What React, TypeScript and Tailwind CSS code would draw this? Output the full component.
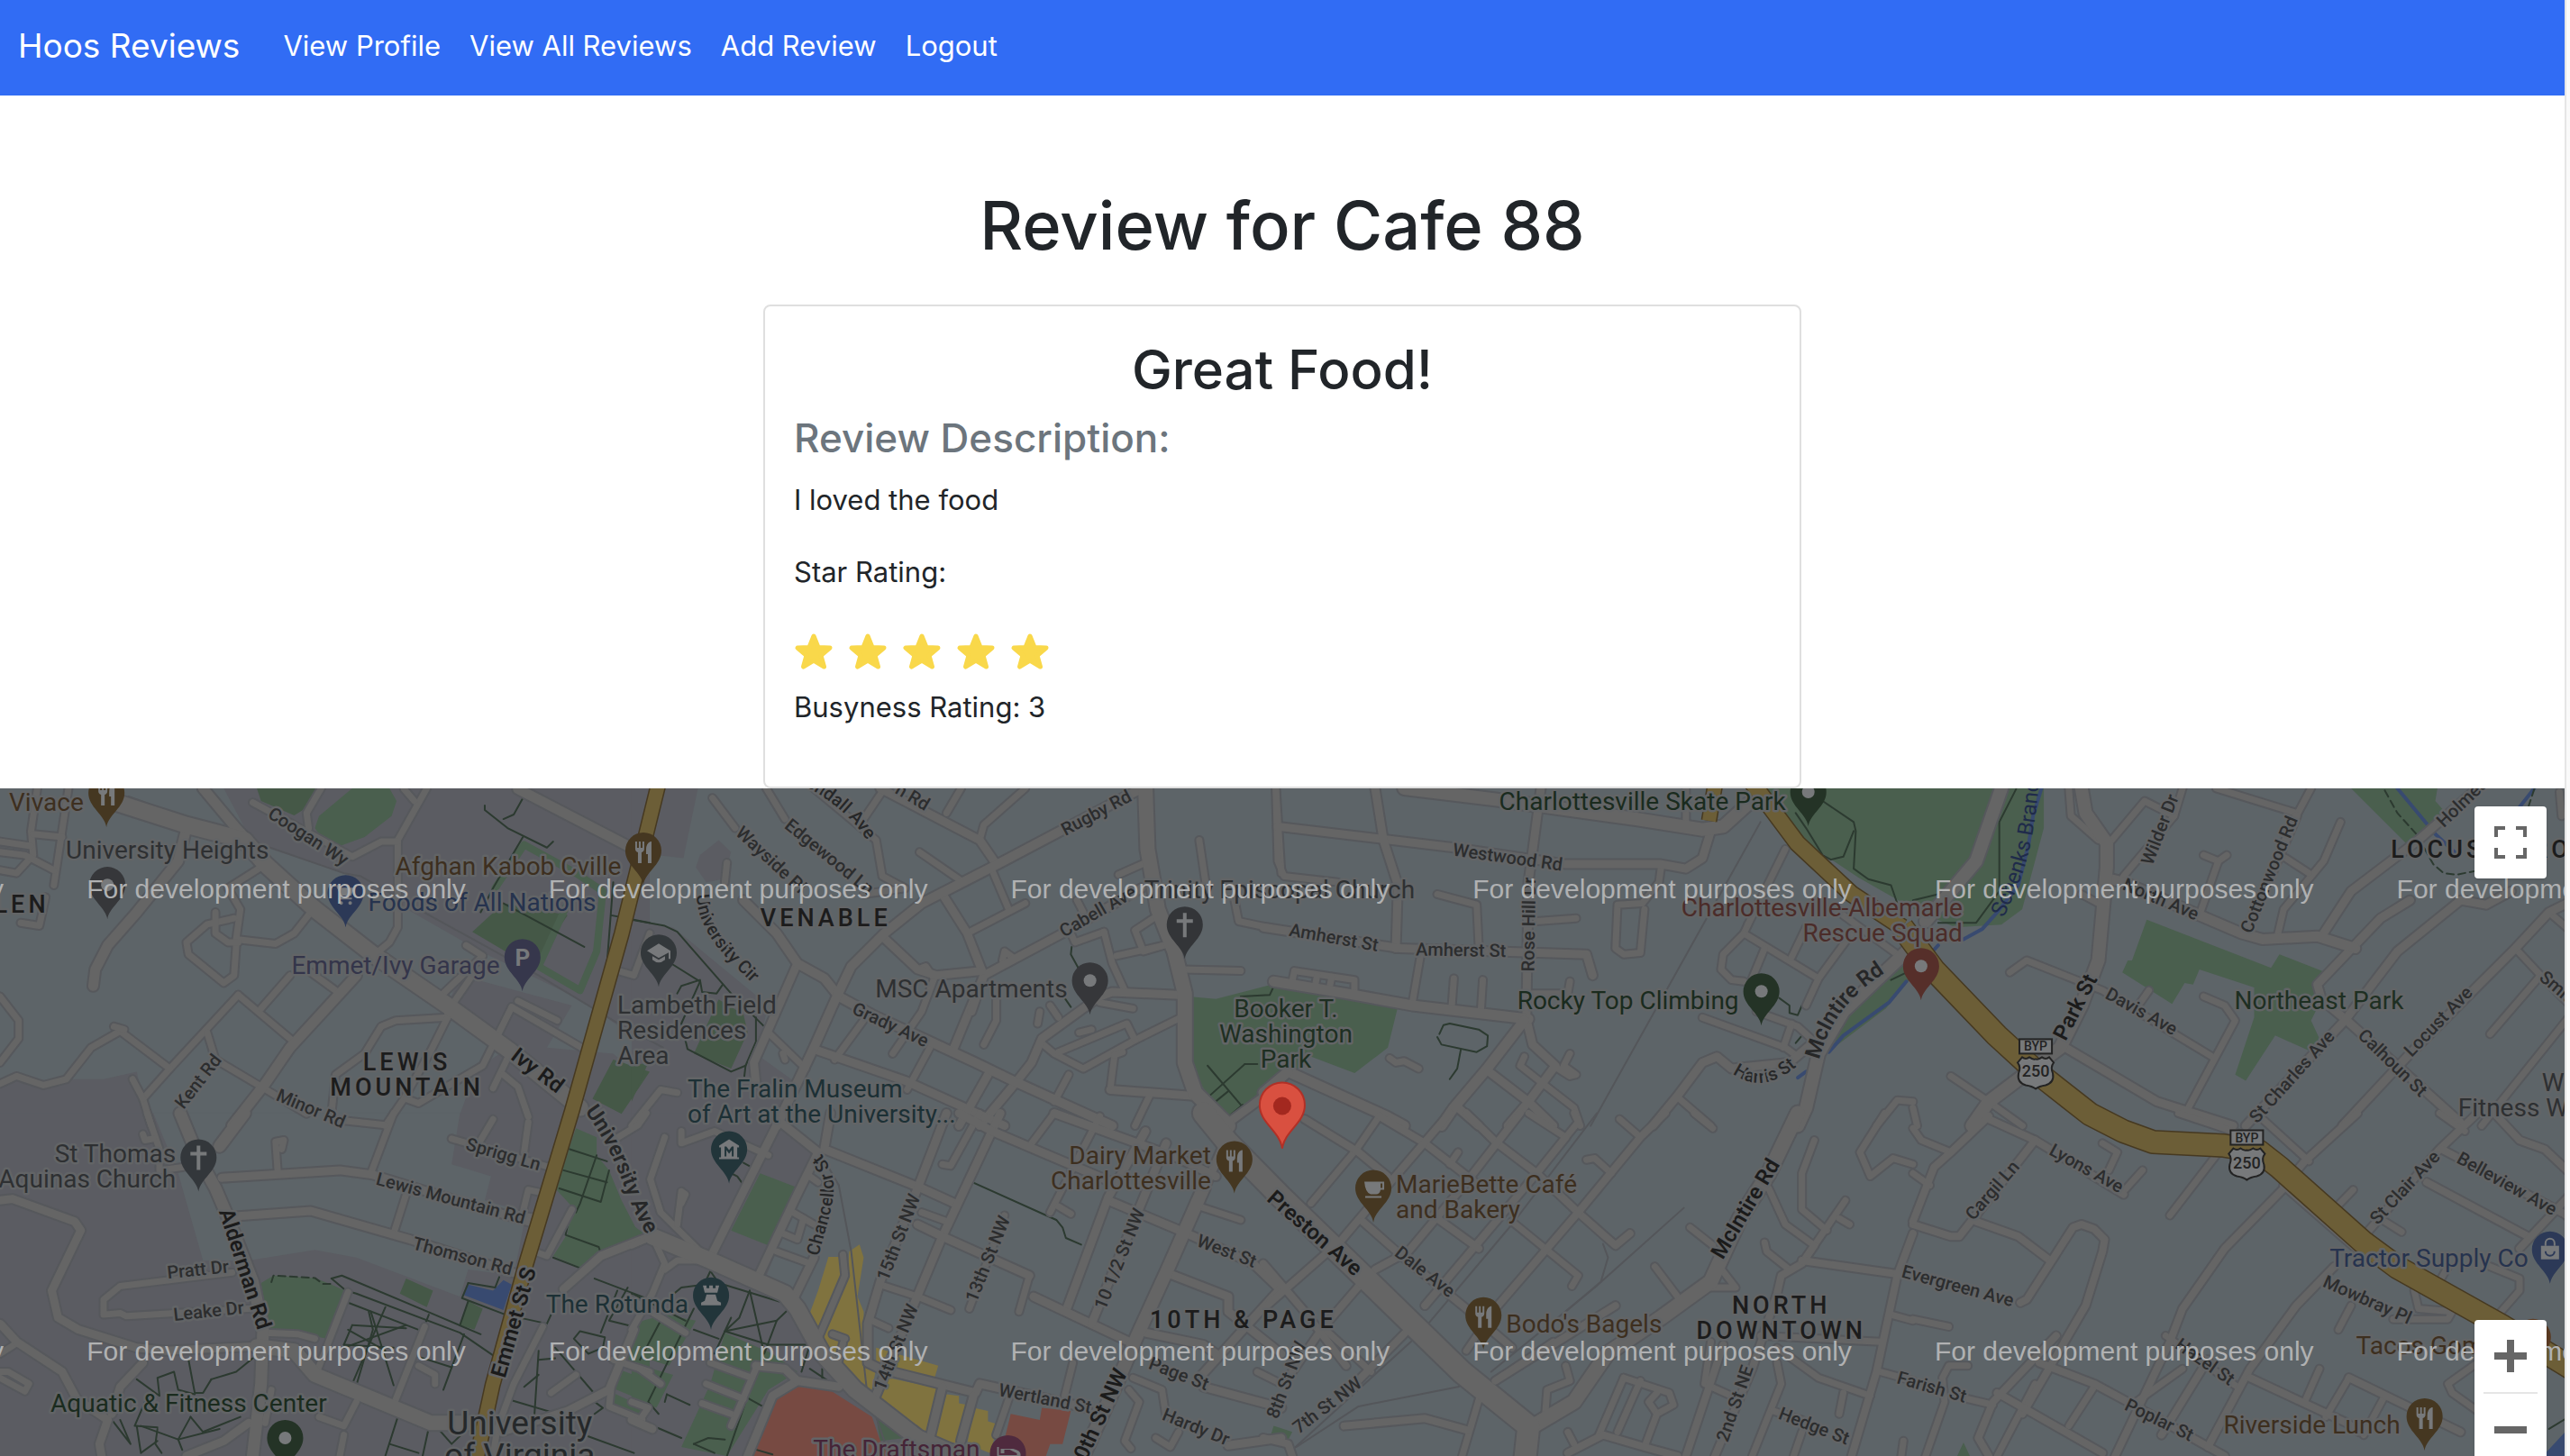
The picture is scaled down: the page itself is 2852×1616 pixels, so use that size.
import React from "react";

/* ---------- map data ---------- */

type TileKey = "A0" | "A1" | "A2" | "A3" | "B0" | "B1" | "B2" | "B3" | "W";

// Origin and horizontal / vertical scale of every survey tile.
const TILES: Record<TileKey, [number, number, number, number]> = {
  A0: [0, 870, 720 / 1568, 1 / 3],
  A1: [700, 870, 720 / 1568, 1 / 3],
  A2: [1400, 870, 720 / 1568, 1 / 3],
  A3: [2120, 870, 732 / 1568, 1 / 3],
  B0: [0, 1236, 720 / 1568, 1 / 3],
  B1: [700, 1236, 720 / 1568, 1 / 3],
  B2: [1400, 1236, 720 / 1568, 1 / 3],
  B3: [2120, 1236, 732 / 1568, 1 / 3],
  W: [0, 0, 1, 1],
};

const at = (tile: TileKey, x: number, y: number): [number, number] => {
  const [ox, oy, sx, sy] = TILES[tile];
  return [Math.round(ox + x * sx), Math.round(oy + y * sy)];
};

const AREAS: [TileKey, string, string[]][] = [
  ["A0", "#5b5c62", [
    "540,18 1568,18 1568,880 1400,720 1160,560 830,300 610,200",
    "0,1010 40,975 105,1005 160,985 250,985 330,960 345,1050 370,1140 0,1140",
    "1110,640 1380,740 1320,880 1480,900 1568,1000 1568,1140 1100,1140 1150,950 1230,880 1080,740",
  ]],
  ["A1", "#5b5c62", ["0,18 160,18 125,250 60,240 0,440", "0,450 100,480 330,740 300,900 400,1000 340,1140 0,1140", "210,190 240,230 220,320 180,330 155,280 165,240"]],
  ["B0", "#5b5c62", ["0,0 1568,0 1568,1140 0,1140"]],
  ["B0", "#5d6468", ["370,0 1110,0 1090,170 1185,210 1170,290 1270,330 1240,540 1130,520 1110,610 860,480 760,455 600,490 490,490 430,200"]],
  ["B1", "#5b5c62", ["0,0 350,0 450,130 400,280 320,560 440,700 520,880 580,960 700,1140 0,1140"]],
  ["A0", "#455847", ["620,18 770,18 755,70 710,108 630,60", "1215,400 1370,440 1300,580 1220,560 1140,495", "1480,920 1568,960 1500,1100 1430,1050"]],
  ["A0", "#4a5f4e", ["850,18 940,18 957,60 945,110 880,180 820,210 780,190 760,150 770,110"]],
  ["A1", "#455847", ["210,720 270,770 280,830 240,950 150,900", "0,940 40,930 0,1060"]],
  ["A1", "#4a5f4e", ["1345,710 1410,718 1545,670 1850,740 1825,880 1745,965 1640,910 1600,960 1440,1120 1360,980 1345,900"]],
  ["W", "#4a5f4e", ["1946,876 2265,876 2265,920 2241,1010 2218,1027 2167,1030 2125,1012 2060,975 1992,930 1975,905", "2124,1050 2140,1060 2090,1120 2030,1165 2045,1130"]],
  ["A3", "#4a5f4e", [
    "555,455 850,615 870,570 980,630 960,690 970,720 945,790 965,850 940,890 860,840 790,990 765,970 810,780 810,680 680,620 665,670 645,665 615,735 497,630 510,590 520,590",
    "1040,18 1245,18 1240,60 1265,100 1170,200",
  ]],
  ["B0", "#4a5f4e", [
    "630,565 660,540 760,548 800,570 840,595 790,750 650,715",
    "1390,50 1440,80 1440,140 1470,190 1500,290 1545,410 1450,475 1405,515 1335,475 1370,400 1380,310 1340,250",
    "1540,740 1568,750 1568,870 1500,820", "1490,850 1568,890 1560,960 1480,915", "1480,930 1550,975 1545,1010 1475,970",
  ]],
  ["B0", "#455847", ["980,550 1045,590 1030,645 965,600", "1130,625 1165,650 1145,720 1110,705"]],
  ["B0", "#384a70", ["1215,555 1235,570 1215,655 1120,605 1130,570 1190,590"]],
  ["B1", "#4a5f4e", [
    "310,200 395,245 330,440 240,390", "80,670 155,690 130,750 90,840 0,800 0,700", "225,730 340,800 400,860 330,920 230,1140 120,1110 190,900",
    "590,1010 660,1080 600,1090", "0,830 100,870 60,980 0,950", "0,370 30,400 0,430",
  ]],
  ["B1", "#80733f", [
    "475,478 505,478 510,540 450,710 430,665 450,590",
    "525,460 550,437 560,480 545,610 560,660 560,760 590,850 575,950 520,880 500,830 460,745 520,560",
    "590,780 740,840 730,885 590,850", "620,880 740,915 715,1070 595,970",
    "760,935 790,940 790,965 810,970 790,1100 730,1080", "825,980 860,990 860,1025 885,1035 865,1130 810,1100",
  ]],
  ["B1", "#774a42", ["410,895 460,905 580,1010 600,1090 620,1140 280,1140 330,940", "915,1000 985,1020 990,980 1060,990 1040,1100 1010,1100 1000,1140 890,1140"]],
  ["B2", "#4a5f4e", ["25,1040 70,1060 55,1100 15,1085"]],
  ["B3", "#384a70", ["1568,1030 1568,1140 1495,1140"]],
  ["B3", "#4a5f4e", ["120,1095 135,1140 105,1140"]],
];

// Streets: tile, carriageway width, centre lines.
const STREETS: [TileKey, number, string[]][] = [
  ["A0", 7, [
    "90,18 75,160 80,240 40,300 0,290", "165,20 130,340", "80,170 150,180", "0,195 75,210", "0,230 60,240 130,290",
    "630,280 550,350 580,420 570,520 665,535 710,500 750,430", "565,450 500,470 450,530 455,570 540,665 565,640 570,540",
    "520,430 520,500 550,530 575,530", "1030,18 960,190 960,480 940,530 905,570", "610,65 850,245 920,195 960,195",
    "775,18 740,100 745,150", "575,705 410,950 345,1050 365,1140", "575,705 700,850", "700,640 630,750", "750,630 810,690",
    "0,1000 40,975 105,1005 160,985 220,880 290,825 410,950", "500,830 520,920 630,1010 740,1100", "0,710 45,790 45,850 0,930",
    "320,985 345,1050", "1080,780 955,790 920,810 880,900 810,970 800,1100", "1080,740 1080,780 1040,890 975,1050 930,1140",
    "1235,745 1165,940 1090,1000 1010,1065 980,1050", "1235,745 1410,885", "1230,900 1190,1015", "1125,540 1165,575 1070,700",
    "1140,640 1090,740", "975,20 1000,60", "1480,620 1530,640 1568,500", "50,465 95,475 110,380", "275,810 300,820",
    "1215,970 1250,1010 1275,1110", "1250,725 1345,790",
  ]],
  ["A0", 11, ["490,18 570,150 610,210", "450,150 430,260 330,430 260,540 230,620 225,675", "860,640 780,760 700,880 640,1000 560,1140", "1250,20 1530,220"]],
  ["A0", 18, ["280,65 450,140 590,190 640,270 760,420 900,570 1080,740 1230,890 1400,1080"]],
  ["A1", 7, [
    "195,50 250,150", "230,265 225,330", "325,18 370,120", "440,18 590,190 605,310 660,350 560,370", "610,18 560,120", "795,18 760,100",
    "950,18 850,140 840,190", "695,230 800,330", "870,290 910,420", "950,400 810,500", "690,620 710,610 730,650 700,760 630,900",
    "895,590 900,560 920,580", "1175,305 1240,265", "1330,620 1470,625", "985,860 1020,900 1090,950 1215,855 1325,780",
    "1215,855 1195,800 1030,895", "1140,495 1070,530 1060,500", "1140,495 1160,600 1190,690", "1285,540 1170,575", "1270,440 1215,490 1235,560 1285,540",
    "1370,190 1385,330", "1075,390 1090,430", "1455,390 1465,460 1568,490", "1555,18 1568,300", "570,770 490,920", "720,880 665,1020",
    "330,830 420,950", "1165,910 1155,1020", "1185,895 1165,905", "0,1140 70,1020 110,1030", "1250,1040 1215,1140", "1055,970 1020,1060",
    "1010,740 1030,780", "985,760 980,800", "880,720 880,790 850,870", "1130,730 1210,750", "365,900 370,920", "1080,830 1110,820",
  ]],
  ["A1", 9, [
    "600,18 840,190 880,270", "755,380 810,500 850,640 775,890", "1230,350 1040,500 850,640 820,760", "605,510 690,620 735,640 845,625",
    "1320,705 1160,695 1130,710 990,850 965,930 925,1000 840,1140", "440,885 660,990 900,1140", "400,600 295,930 300,1000", "860,970 790,1140",
    "1155,1020 1350,1040", "1440,1130 1568,1000",
  ]],
  ["A1", 10, ["270,390 350,500 400,600 465,650 500,710 580,770 830,930 920,990 1160,1140", "1230,18 870,280 700,400 610,500 530,610 495,710 440,880 350,1140"]],
  ["A1", 16, ["1240,18 1245,220 1270,420 1310,560 1335,700 1335,930 1360,1030 1440,1140"]],
  ["A2", 7, [
    "30,18 35,260 50,310 180,330", "960,280 955,330 915,400 855,405 850,550 870,570 910,565 920,420", "660,460 755,450", "420,370 515,405 520,540",
    "380,570 360,730", "460,650 455,740", "530,655 525,760", "740,660 735,700 650,700", "70,660 75,625 220,655 220,690", "130,640 125,675", "165,645 160,680",
    "1170,470 1160,500 1340,650", "1160,500 1110,570 1105,620 1130,655 1160,660", "1210,550 1180,650", "1420,500 1340,650 1310,740", "1260,220 1170,470",
    "1060,780 1260,880 1290,910", "1190,760 1290,810 1330,860", "1275,800 1255,880", "1000,1045 1080,1140", "1400,440 1540,580", "1568,1060 1530,1055 1480,1140",
    "630,910 620,940 675,1000 750,1080 765,1140", "740,900 725,940 755,970 740,975 700,940", "1020,18 1020,130", "305,915 320,930 340,925 375,950", "1310,480 1275,580",
  ]],
  ["A2", 9, [
    "35,145 460,215 730,270 960,270 1020,285 1060,250 1080,160", "270,18 290,190 325,340 320,550", "670,18 640,330 635,770", "0,480 330,550 780,570 795,640",
    "635,785 650,870 705,940 640,1060 590,1140", "540,955 640,1060 700,1140", "1330,860 1270,930 1130,950 1095,910 1060,930 1000,1040 940,1140", "470,1080 520,1140",
  ]],
  ["A2", 11, ["25,660 200,700 360,740 640,785", "630,790 540,950 460,1080 430,1140", "60,960 300,1110 340,1140", "0,1030 60,960"]],
  ["A2", 14, ["340,18 560,55 900,120 1060,155 1110,145 1170,70", "1568,540 1400,760 1340,900 1310,1080 1290,1140"]],
  ["A3", 7, [
    "370,18 375,110 440,190", "460,210 550,60 620,110 640,18", "620,110 500,310", "720,18 910,100", "945,18 910,110", "1015,130 975,260 880,420 865,510",
    "885,250 940,300", "690,240 725,260 745,240", "725,260 680,440", "230,630 270,590 450,690 710,910", "560,690 540,730", "690,710 740,740 765,790 650,1090",
    "1510,430 1568,500", "1430,550 1490,640 1568,750", "1490,640 1370,835", "1568,760 1350,1140", "90,975 180,1060 260,1140", "0,1080 10,1140",
    "1535,30 1540,110", "400,370 440,400",
  ]],
  ["A3", 9, [
    "910,110 790,500", "1340,18 1200,190 1040,360 970,510", "1180,390 1110,450 960,670 970,720 1030,790 1300,1130",
    "1420,360 1360,405 1300,390 1150,560 1025,790 790,1140", "1568,390 1510,430 1430,550 1180,900 1020,1140", "350,870 580,1060 760,1140",
  ]],
  ["A3", 11, ["470,320 500,330 680,440 780,500 830,520 960,510 1050,550"]],
  ["A3", 14, ["400,18 410,100 460,200 460,280 440,590 400,740 350,880 180,1060 140,1140", "210,18 150,260 30,460"]],
  ["B0", 7, [
    "355,0 385,120 385,190 440,180", "950,0 895,200", "980,270 950,400", "670,190 665,95 685,90 680,120", "800,20 930,40", "1090,85 1340,185", "1160,90 1190,20",
    "1265,130 1275,30", "1310,265 1275,255 1260,340 1300,350", "560,530 290,575 250,620 250,670 290,665 305,675 600,650", "640,730 720,735 760,750",
    "840,595 765,860", "1025,710 950,970", "1310,710 1240,900 1200,1050 1190,1140", "1380,320 1320,475 1300,465", "0,800 40,765",
    "0,860 20,860 70,900 60,925 0,880", "860,960 830,1040 770,1010", "1480,90 1540,40 1560,0", "1480,820 1568,860", "1475,915 1470,975 1550,1020",
    "345,70 350,90 370,85", "655,920 640,1030", "1010,840 1050,870 1050,900", "1330,930 1390,870", "830,1070 820,1140",
  ]],
  ["B0", 9, [
    "535,215 820,190 900,205 1100,290 1300,370", "550,345 750,325 990,420 1260,540", "0,290 30,285 180,360 195,390 125,590 140,680 190,720 330,780 400,790 620,775",
    "1560,415 1450,475 1360,585", "0,700 40,760 150,860 185,950 260,1020 240,1100 245,1140", "345,830 290,910 270,1000", "450,1140 540,1090 600,1030",
    "1530,720 1470,920 1370,990 1210,1060",
  ]],
  ["B0", 13, ["590,0 530,110", "435,0 480,150 520,250 545,330 610,560 635,720 630,900 610,1140"]],
  ["B0", 16, ["620,775 710,790 760,870 900,950 1040,1030 1150,1030"]],
  ["B1", 7, [
    "390,330 440,370", "350,460 430,500", "415,350 400,420 365,400", "960,540 935,660", "1020,0 960,110", "1130,10 1010,330", "1030,310 1060,335",
    "1370,310 1470,355", "600,570 690,610 770,655", "580,690 620,715", "910,950 880,1070", "1065,830 1045,940", "1200,920 1225,960 1190,1090 1205,1115",
    "1210,880 1280,920 1290,1010", "80,80 45,220 70,330 180,480", "110,370 120,260 130,270 120,300", "0,440 50,410 80,500 50,600 0,720", "80,520 110,490 190,490",
    "510,470 515,540 450,750", "485,735 515,750", "300,850 240,1040", "0,620 130,730", "750,170 770,175 840,0", "900,340 815,650", "700,330 760,360",
    "20,850 70,900", "190,830 290,880", "180,900 270,950", "170,965 240,1000", "0,960 40,980 20,1020", "120,60 120,100 200,60 330,140", "510,765 495,850",
    "1510,860 1568,900", "1265,1080 1300,1110 1320,1060", "430,210 450,230",
  ]],
  ["B1", 9, [
    "350,40 190,480", "350,20 450,130 400,270 300,560", "480,0 465,120 700,250 780,300", "440,480 390,620", "760,0 690,250 600,560 570,700 570,830 600,850 830,930 840,900 1100,980",
    "890,0 750,410 680,640 580,970", "1150,290 1340,400 1500,500 1568,590", "690,370 750,410 960,540", "1240,60 1150,280 1050,650", "970,610 1200,760",
    "1290,100 1110,700", "1440,70 1370,290", "790,0 870,60 1160,230", "1290,530 1440,610 1440,660 1568,800", "1568,580 1370,880", "1240,730 1380,770 1410,800",
    "750,910 720,1080", "825,940 795,1090", "1380,910 1568,980", "1440,1105 1568,1080", "280,1140 340,940 400,890 500,910", "0,1020 50,1050", "1020,0 1320,150 1410,210",
    "300,840 370,850 400,890",
  ]],
  ["B1", 14, ["1380,250 1290,530 1220,740 1180,870 1090,1140"]],
  ["B1", 18, ["50,410 190,490 370,600 400,650 460,800 540,920 690,1080 790,1140"]],
  ["B2", 7, [
    "640,0 730,80 760,30 750,0", "280,10 225,120 115,300", "600,360 760,540 745,575", "150,720 260,860", "860,20 910,80", "780,155 800,150 840,200", "1040,0 1085,50",
    "470,130 450,170", "1330,90 1300,200 1300,320 1360,390", "1220,250 1260,370 1330,440 1405,290", "1390,350 1415,370", "1210,430 1215,460 1265,515", "1030,380 1085,440",
    "945,510 1000,610", "1095,500 1140,580 1060,580", "1500,0 1440,130 1465,210 1520,150 1568,170", "1568,690 1515,670", "1240,780 1340,880 1465,940", "1400,930 1390,1000",
    "1490,860 1568,890", "1240,830 1250,900 1180,1140", "870,880 810,1070", "870,880 980,930 990,970 950,1000 930,960 950,930", "950,1000 920,1110", "910,890 855,1060",
    "735,1060 750,1100", "525,930 480,1140", "1080,760 1065,900 1130,940", "730,840 740,890 685,920 680,1010", "1230,990 1300,1020", "1300,1060 1280,1140",
    "1200,740 1490,760", "560,890 700,760", "490,790 520,730", "1545,1090 1540,1140",
  ]],
  ["B2", 8, [
    "100,20 230,130 300,210", "280,10 390,100 520,240", "490,0 560,95 660,200 760,330 850,440 885,400", "450,0 300,240 190,420 0,650", "620,0 490,230 350,460 270,520",
    "730,80 660,200 390,640", "970,0 910,80 760,330 560,650", "240,360 330,470 490,650 600,780", "0,500 100,660 200,840", "240,560 140,720 60,880", "350,720 200,930", "410,340 520,450",
    "1330,440 1300,500 1250,540 1240,600 1180,850 1090,1140", "1300,490 1530,535", "1568,400 1530,540 1480,860 1420,1140", "735,1130 820,1070 920,1110 1000,1140",
    "195,1040 390,1015 495,1055", "560,890 850,640", "1110,770 1020,1140", "0,1080 60,1100 70,1140",
  ]],
  ["B2", 16, ["640,1050 750,960 830,800 960,680 1080,560 1150,350 1220,200 1290,0"]],
  ["B3", 7, [
    "0,50 20,90 90,130", "0,200 40,240", "430,910 370,1040", "720,140 610,340", "600,740 770,910", "545,190 500,260", "450,100 485,130 465,190", "830,20 940,160", "630,0 780,70",
    "1250,0 1310,60", "1045,255 1000,320", "1120,360 1160,395", "0,685 85,710", "130,840 85,840 70,880 75,960 30,1140", "130,950 190,970", "965,850 930,960", "1035,880 980,1010",
    "1120,940 1070,1070", "1040,640 1010,720", "1190,590 1200,650 1280,660 1270,685 1140,685", "1370,510 1440,550 1440,590 1390,670", "1340,830 1270,900 1280,930 1350,1000",
    "1250,560 1270,510", "1540,330 1568,360", "640,850 530,960", "290,900 200,1140",
  ]],
  ["B3", 8, [
    "180,20 290,90 500,270", "290,90 110,410 90,410 0,370", "150,360 250,410 325,490", "180,10 90,130 50,180 0,360", "255,630 270,620 380,380 400,370 430,385 455,420 450,460 410,640 260,1000",
    "300,830 430,900 510,960 740,1140", "880,250 740,450 640,650 610,760 480,1140", "1000,510 910,640 800,850 700,1110", "1055,0 930,160 900,210", "1340,0 1250,120 1070,410",
    "1380,0 1440,90 1500,120 1568,210", "1255,120 1540,330", "1220,230 1460,410", "1568,260 1440,450", "200,930 450,1130", "800,880 1030,1030 1060,1060", "1035,880 1300,1060",
    "340,740 190,960 155,1080 180,1140", "880,240 1060,460", "700,820 590,1070",
  ]],
  ["W", 24, ["1334,1236 1361,1269 1420,1329 1510,1416 1620,1523 1694,1583 1690,1620"]],
];

const HIGHWAYS: [number, string][] = [
  [15, "730,870 689,1037 634,1233 583,1403 546,1537 528,1620"],
  [15, "1901,870 1894,912"],
  [17, "1942,870 1992,937 2052,993 2108,1030"],
  [24, "2108,1030 2143,1077 2213,1150 2260,1193 2316,1237 2353,1256 2386,1268 2465,1272 2503,1278 2526,1296 2619,1379 2657,1407 2773,1472 2852,1520"],
];

const RAILS: [TileKey, string[]][] = [
  ["A0", ["310,45 600,190 830,300 870,310 1010,420 1300,640 1480,790 1600,880"]],
  ["A2", ["1200,130 790,1140"]],
  ["B1", ["500,240 530,460 570,950", "370,30 450,120 500,240", "590,1010 610,1090"]],
  ["B2", ["805,0 600,370 380,730 70,1120", "1015,315 800,580 550,860", "500,890 470,910 230,975 80,1110", "820,435 832,480 815,560 730,660"]],
];

const TRAILS: [TileKey, string[]][] = [
  ["A0", ["1170,75 1170,90 1225,150 1320,215 1335,195", "1262,50 1240,105 1215,120", "1262,180 1190,350 1160,430", "1215,400 1410,545", "1480,330 1465,600", "1475,440 1568,465"]],
  ["A1", ["0,455 80,475 110,495 240,700 320,810", "300,780 300,860 275,940 240,960 135,885 120,800 165,660 95,600", "275,940 272,975", "110,700 120,675 165,655 170,695 205,700 220,670",
    "1062,545 1060,570 1080,620", "1045,715 1060,745", "1390,940 1470,1070", "1480,935 1395,1040", "1510,935 1480,935", "1440,1025 1400,1070 1440,1110 1475,1070", "1550,675 1540,705 1470,710"]],
  ["A2", ["425,835 435,805 450,800 520,820 542,840 540,875 515,895 430,870 420,845", "477,885 468,950 450,985", "1285,100 1310,150 1350,240 1370,255 1400,245 1425,160", "1350,60 1425,130 1430,160 1425,285 1460,320 1515,340 1530,400",
    "1245,715 1270,740 1270,765 1290,772 1300,740", "1300,840 1285,865", "1568,620 1515,655"]],
  ["A3", ["245,20 205,130 205,320 205,360 150,465 60,465", "0,390 60,370", "130,700 215,830"]],
  ["B0", ["1375,120 1465,160", "1360,190 1465,230", "1350,250 1450,295 1470,190", "1440,140 1400,300 1390,330", "1380,310 1365,405 1445,445 1450,465", "1335,480 1400,515",
    "800,550 825,540 1040,665 1160,735", "800,550 835,590 860,600 1110,730 1195,810", "840,630 1010,720", "930,645 850,900", "895,660 950,905", "850,705 980,715", "850,705 830,770", "840,720 930,790", "980,705 830,780", "830,770 950,780", "860,905 900,720 890,660",
    "1130,625 1110,705", "1130,565 1195,580 1205,545", "1130,565 1115,615 1220,670 1320,700 1340,640", "1035,670 1025,705", "1120,735 1070,920", "1010,810 1090,845",
    "330,885 385,940 380,880 420,860 430,920 470,935", "455,820 470,930 490,930 510,885", "510,885 570,860 610,815", "340,1040 430,1085 530,1050", "460,1010 430,1085 440,1120", "460,1010 490,1060 580,1010", "270,1020 315,1100 290,1020", "330,1040 340,1130 380,1090", "380,1050 375,1100 390,1130",
    "350,960 325,1040 380,1045", "1300,790 1290,1000", "1300,820 1340,815", "1300,870 1265,910", "1340,780 1430,925", "1385,750 1400,725 1460,745 1455,780 1420,800 1385,750", "1435,550 1568,620", "1515,580 1470,690 1530,710", "1490,590 1450,730",
    "1235,955 1370,1010", "1435,960 1455,980 1435,1000", "1420,1075 1530,1130", "1035,1045 1020,1140", "1055,1045 1090,1100 1120,1060", "960,1010 930,1140", "940,1100 1010,1130"]],
  ["B1", ["820,228 1025,355 1040,380 1048,415 1085,437", "270,165 290,180", "240,200 255,210 268,235", "190,525 210,565 365,630", "190,525 175,570 120,580 50,660", "285,590 260,680 225,725 350,690 380,650", "285,590 320,800 350,690",
    "225,725 330,770 430,770", "150,650 40,960 65,1000", "150,720 210,750", "240,680 200,800", "430,850 485,900", "410,860 430,770", "460,850 460,885", "85,935 80,960", "85,935 140,970", "300,860 230,1140", "330,985 270,940", "60,1045 120,1080", "70,690 20,820", "150,1100 185,1080 225,1085", "150,1100 200,1130", "290,1115 340,1135", "0,600 130,690"]],
  ["B3", ["1568,1000 1510,1050", "1550,870 1568,885"]],
];

const DASHED: [TileKey, string[]][] = [
  ["A3", ["1120,25 1150,100 1195,170 1235,270 1260,300 1290,305 1345,290", "1475,20 1462,75"]],
  ["B0", ["655,562 660,540 760,548 780,568 805,568"]],
];

const CREEKS: [TileKey, string[]][] = [
  ["A3", ["305,18 285,110 275,200 250,340 200,430 165,485 120,520", "1150,18 1240,170 1290,235", "1475,18 1440,80", "60,540 40,570"]],
  ["A2", ["1552,660 1510,730 1400,840 1365,895", "1310,960 1290,980"]],
];

type Label = [TileKey, string, number, number, number, number];

// Street names: tile, name, baseline start and end.
const STREET_NAMES: Label[] = [
  ["A0", "Coogan Wy", 645, 115, 825, 272], ["A0", "Kent Rd", 445, 1082, 535, 925], ["A0", "Minor Rd", 668, 1055, 820, 1145],
  ["A1", "Wayside Pl", 250, 170, 400, 365], ["A1", "Edgewood Ln", 370, 150, 565, 370], ["A1", "Rugby Rd", 1050, 172, 1205, 60],
  ["A1", "n Rd", 640, 40, 700, 88], ["A1", "Cabell Ave", 1045, 512, 1220, 375], ["A1", "Grady Ave", 530, 765, 705, 875],
  ["A2", "Westwood Rd", 458, 240, 718, 290], ["A2", "Amherst St", 60, 508, 272, 558], ["A2", "Amherst St", 368, 572, 585, 578],
  ["A2", "Rose Hill Dr", 653, 628, 657, 315], ["A3", "Wilder Dr", 568, 272, 630, 50], ["A3", "Cottonwood Rd", 803, 500, 915, 120],
  ["A3", "North Ave", 495, 350, 668, 455], ["A3", "Davis Ave", 455, 715, 615, 838], ["A3", "St Charles Ave", 820, 1130, 1000, 850],
  ["A3", "Calhoun St", 1055, 850, 1200, 1040], ["A3", "Locust Ave", 1185, 912, 1330, 700], ["A3", "Smith St", 1490, 660, 1600, 790],
  ["A3", "Holmes Ave", 1285, 118, 1400, -40],
  ["B0", "Sprigg Ln", 1125, 120, 1295, 188], ["B0", "Lewis Mountain Rd", 905, 235, 1260, 370], ["B0", "Thomson Rd", 995, 450, 1228, 538],
  ["B0", "Pratt Dr", 408, 548, 552, 528], ["B0", "Leake Dr", 422, 690, 588, 665],
  ["B1", "15th St NW", 620, 555, 695, 285], ["B1", "13th St NW", 832, 630, 912, 355], ["B1", "10 1/2 St NW", 1143, 655, 1240, 330],
  ["B1", "14th St NW", 612, 920, 690, 650], ["B1", "West St", 1362, 440, 1500, 512], ["B1", "Page St", 1245, 845, 1385, 920],
  ["B1", "Wertland St", 885, 938, 1105, 1000], ["B1", "Hardy Dr", 1280, 1020, 1430, 1105],
  ["B2", "Dale Ave", 318, 475, 445, 610], ["B2", "8th St NW", 35, 1015, 103, 775], ["B2", "7th St NW", 88, 1065, 240, 905],
  ["B2", "2nd St NE", 1120, 1098, 1183, 845], ["B2", "Hedge St", 1242, 1015, 1405, 1102],
  ["B3", "Lyons Ave", 320, 135, 490, 268], ["B3", "Cargil Ln", 145, 355, 250, 185], ["B3", "Belleview Ave", 1290, 165, 1515, 338],
  ["B3", "St Clair Ave", 1105, 370, 1250, 150], ["B3", "Evergreen Ave", -40, 540, 245, 645], ["B3", "Mowbray Pl", 975, 580, 1170, 700],
  ["B3", "Hazel St", 622, 780, 750, 905], ["B3", "Poplar St", 500, 985, 655, 1092], ["B3", "Farish St", -50, 895, 130, 965],
];

const MAIN_NAMES: Label[] = [
  ["A0", "Ivy Rd", 1235, 920, 1340, 1030], ["A3", "Park St", 365, 855, 438, 655],
  ["B0", "Emmet St S", 1215, 890, 1295, 510], ["B0", "Alderman Rd", 528, 330, 620, 720],
  ["B2", "Preston Ave", 8, 290, 215, 540], ["B2", "McIntire Rd", 1110, 485, 1245, 175], ["B1", "10th St NW", 1080, 1210, 1200, 850],
];

// Names that bend along their street.
const CURVED: [string, string, number, number, string][] = [
  ["c1", "M882 868 Q956 905 974 962", 20, 500, "Tendall Ave"],
  ["c2", "M772 994 C774 1040 808 1066 842 1100", 20, 500, "University Cir"],
  ["c3", "M2016 1177 C2028 1130 2056 1100 2096 1076", 24, 600, "McIntire Rd"],
  ["c4", "M1920 1192 Q1958 1220 2004 1172", 20, 500, "Harris St"],
  ["c5", "M2220 1020 C2250 960 2254 930 2262 850", 24, 400, "Schenks Branch"],
  ["c6", "M907 1395 C920 1340 940 1310 902 1272", 20, 500, "Chancellor St"],
  ["c7", "M648 1234 C690 1290 690 1330 722 1380", 24, 600, "University Ave"],
];

type Place = [number, number, string, string[], "start" | "middle" | "end"];
const PLACES: Place[] = [
  [10, 901, "#3d2f1f", ["Vivace"], "start"],
  [73, 954, "#2e3032", ["University Heights"], "start"],
  [438, 972, "#3d2f1f", ["Afghan Kabob Cville"], "start"],
  [408, 1012, "#26334e", ["Foods of All Nations"], "start"],
  [323, 1082, "#34354a", ["Emmet/Ivy Garage"], "start"],
  [684, 1126, "#2e3032", ["Lambeth Field", "Residences", "Area"], "start"],
  [762, 1219, "#1c3035", ["The Fralin Museum", "of Art at the University..."], "start"],
  [1183, 1108, "#2e3032", ["MSC Apartments"], "end"],
  [1268, 998, "#2e3032", ["Trinity Episcopal Church"], "start"],
  [1425, 1130, "#1e2f22", ["Booker T.", "Washington", "Park"], "middle"],
  [1979, 900, "#1a2b1e", ["Charlottesville Skate Park"], "end"],
  [1927, 1121, "#1a2b1e", ["Rocky Top Climbing"], "end"],
  [2175, 1018, "#4b2c29", ["Charlottesville-Albemarle", "Rescue Squad"], "end"],
  [2570, 1121, "#1e2f22", ["Northeast Park"], "middle"],
  [2817, 1212, "#2e3032", ["Wa"], "start"],
  [2724, 1240, "#2e3032", ["Fitness W"], "start"],
  [195, 1290, "#2e3032", ["St Thomas", "Aquinas Church"], "end"],
  [763, 1457, "#1c3035", ["The Rotunda"], "end"],
  [1342, 1292, "#3d2f1f", ["Dairy Market", "Charlottesville"], "end"],
  [1547, 1324, "#3d2f1f", ["MarieBette Café", "and Bakery"], "start"],
  [1669, 1479, "#3d2f1f", ["Bodo's Bagels"], "start"],
  [56, 1567, "#1a2b1e", ["Aquatic & Fitness Center"], "start"],
  [1086, 1618, "#452437", ["The Draftsman"], "end"],
  [2802, 1406, "#26334e", ["Tractor Supply Co"], "end"],
  [2611, 1503, "#3d2f1f", ["Tacos Gomez"], "start"],
  [2660, 1591, "#3d2f1f", ["Riverside Lunch"], "end"],
];

const DISTRICTS: [number, number, string[]][] = [
  [915, 1029, ["VENABLE"]],
  [451, 1189, ["LEWIS", "MOUNTAIN"]],
  [1378, 1474, ["10TH & PAGE"]],
  [1974, 1458, ["NORTH", "DOWNTOWN"]],
  [24, 1014, ["LEN"]],
  [2770, 953, ["LOCUST GROVE"]],
];

type Glyph = "food" | "dot" | "cart" | "P" | "grad" | "cross" | "museum" | "rook" | "cup" | "bed" | "bag";
const PINS: [number, number, string, Glyph][] = [
  [118, 919, "#453721", "food"], [119, 1021, "#36373a", "dot"], [383, 1030, "#2c3957", "cart"], [579, 1101, "#36374c", "P"],
  [713, 983, "#453721", "food"], [730, 1096, "#33383b", "grad"], [1313, 1065, "#333538", "cross"], [1208, 1127, "#36373a", "dot"],
  [2004, 918, "#243326", "dot"], [1952, 1139, "#243326", "dot"], [2129, 1111, "#562f2a", "dot"], [220, 1323, "#33373b", "cross"],
  [808, 1314, "#22353a", "museum"], [788, 1476, "#22353a", "rook"], [1368, 1325, "#453721", "food"], [1522, 1357, "#453721", "cup"],
  [1644, 1498, "#453721", "food"], [1117, 1651, "#4f2a3e", "bed"], [316, 1634, "#243326", "dot"], [2826, 1425, "#2c3957", "bag"],
  [2687, 1610, "#453721", "food"], [2807, 1522, "#5a3a22", "food"],
];

const GLYPH = "#77797b";

function PinGlyph({ kind }: { kind: Glyph }) {
  switch (kind) {
    case "food":
      return <path d="M-9-10v8q0 3 3 4v12h4V2q3-1 3-4v-8h-2v7h-2v-7h-2v7h-2v-7zM8-10q-5 2-5 9v5h2v10h4v-24z" fill={GLYPH} />;
    case "cart":
      return <path d="M-10-9h4l1 3h15l-4 9h-10l-1 2h12v2h-15l2-5-4-9zM-5 9a2 2 0 1 0 .1 0M5 9a2 2 0 1 0 .1 0" fill={GLYPH} />;
    case "P":
      return <text y="10" textAnchor="middle" fontSize="26" fontWeight="700" fill={GLYPH}>P</text>;
    case "grad":
      return <path d="M0-10l13 8v9h-2v-7l-11 6-13-8zM-7 4l7 4 7-4v4q-7 6-14 0z" fill={GLYPH} />;
    case "cross":
      return <path d="M-2-13h4v7h7v4h-7v16h-4v-16h-7v-4h7z" fill={GLYPH} />;
    case "museum":
      return <path d="M0-11L11-4v2h-2v11h2v2h-22v-2h2v-11h-2v-2zM-5 8h2v-7l3 4 3-4v7h2v-11h-2l-3 4-3-4h-2z" fill={GLYPH} fillRule="evenodd" />;
    case "rook":
      return <path d="M-9-11h4v3h3v-3h4v3h3v-3h4l-2 8h-14zM-5-1h10l2 7 4 2v3h-22v-3l4-2z" fill={GLYPH} />;
    case "cup":
      return <path d="M-10-7h22v9h-4q-1 5-5 5h-6q-6-2-7-14zM8-5v5h2v-5zM-9 9h18v2h-18z" fill={GLYPH} fillRule="evenodd" />;
    case "bed":
      return <path d="M-12-7h2v9h20v-2l-8-4h-6v4h-4v-5h14q8 2 8 6v7h-2v-4h-22v4h-2z" fill={GLYPH} />;
    case "bag":
      return (
        <g>
          <rect x="-10" y="-4" width="20" height="15" fill={GLYPH} />
          <path d="M-5-4v-3a5 5 0 0 1 10 0v3" fill="none" stroke={GLYPH} strokeWidth="2" />
          <path d="M-5 2a5 5 0 0 0 10 0" fill="none" stroke="#2c3957" strokeWidth="2" />
        </g>
      );
    default:
      return <circle r="7" fill={GLYPH} />;
  }
}

const PIN = "M0 0C-2-14-20-22-20-38A20 20 0 0 1 20-38C20-22 2-14 0 0Z";

function TileLines({ tile, lines, ...rest }: { tile: TileKey; lines: string[] } & React.SVGProps<SVGGElement>) {
  const [ox, oy, sx, sy] = TILES[tile];
  return (
    <g fill="none" strokeLinecap="round" strokeLinejoin="round" {...rest} transform={`translate(${ox} ${oy}) scale(${sx} ${sy})`}>
      {lines.map((p) => (
        <polyline key={p} points={p} vectorEffect="non-scaling-stroke" />
      ))}
    </g>
  );
}

function StreetLabel({ label, size, weight, fill }: { label: Label; size: number; weight: number; fill: string }) {
  const [tile, name, x1, y1, x2, y2] = label;
  const [ax, ay] = at(tile, x1, y1);
  const [bx, by] = at(tile, x2, y2);
  const angle = Math.round((Math.atan2(by - ay, bx - ax) * 180) / Math.PI);
  return (
    <text
      transform={`translate(${Math.round((ax + bx) / 2)} ${Math.round((ay + by) / 2)}) rotate(${angle})`}
      textAnchor="middle"
      fontSize={size}
      fontWeight={weight}
      fill={fill}
    >
      {name}
    </text>
  );
}

function Shield({ x, y }: { x: number; y: number }) {
  return (
    <g transform={`translate(${x} ${y})`} stroke="#232323" strokeWidth="2" fill="#77797b">
      <rect x="-18" y="-46" width="36" height="16" />
      <path d="M-15-26q4 3 8 0 4 3 7 2 3 1 7-2 4 3 8 0l5 6q-4 5-1 12 2 10-8 13-7 1-11 4-4-3-11-4-10-3-8-13 3-7-1-12z" />
      <g stroke="none" fill="#232323" textAnchor="middle" fontWeight="500">
        <text y="-33" fontSize="14">BYP</text>
        <text y="-4" fontSize="18">250</text>
      </g>
    </g>
  );
}

function MapCanvas() {
  return (
    <svg
      viewBox="0 876 2846 740"
      preserveAspectRatio="xMinYMin slice"
      className="absolute inset-0 size-full font-['Roboto',sans-serif]"
      role="img"
      aria-label="Map of Charlottesville"
    >
      <rect y="876" width="2852" height="1200" fill="#5d6468" />
      {AREAS.map(([tile, color, shapes]) =>
        shapes.map((s) => {
          const [ox, oy, sx, sy] = TILES[tile];
          return <polygon key={s} points={s} fill={color} transform={`translate(${ox} ${oy}) scale(${sx} ${sy})`} />;
        }),
      )}
      <TileLines tile="A0" lines={["1195,350 1265,205 1390,300 1455,360 1440,560 1400,690 1300,610 1370,400"]} stroke="#4a5f4e" strokeWidth="8" />
      {CREEKS.map(([t, l]) => <TileLines key={t} tile={t} lines={l} stroke="#384a70" strokeWidth="4" />)}
      {RAILS.map(([t, l]) => <TileLines key={t} tile={t} lines={l} stroke="#54565a" strokeWidth="2" />)}
      {TRAILS.map(([t, l]) => <TileLines key={t} tile={t} lines={l} stroke="#2c3a30" strokeWidth="2" />)}
      {DASHED.map(([t, l]) => <TileLines key={t} tile={t} lines={l} stroke="#2c3a30" strokeWidth="2" strokeDasharray="8 5" />)}
      {STREETS.map(([t, w, l]) => <TileLines key={t + w} tile={t} lines={l} stroke="#56585c" strokeWidth={w + 4} />)}
      {STREETS.map(([t, w, l]) => <TileLines key={t + w} tile={t} lines={l} stroke="#656565" strokeWidth={w} />)}
      <g fill="none" strokeLinejoin="round">
        {HIGHWAYS.map(([w, p]) => <polyline key={p} points={p} stroke="#463921" strokeWidth={w + 3} />)}
        {HIGHWAYS.map(([w, p]) => <polyline key={p} points={p} stroke="#6c5e37" strokeWidth={w} />)}
      </g>

      <g paintOrder="stroke" stroke="#626466" strokeWidth="5" strokeLinejoin="round">
        {STREET_NAMES.map((l) => <StreetLabel key={l[0] + l[1] + l[2]} label={l} size={20} weight={500} fill="#2c2d2e" />)}
        {MAIN_NAMES.map((l) => <StreetLabel key={l[1] + l[2]} label={l} size={24} weight={600} fill="#1b1b1b" />)}
        {CURVED.map(([id, d, size, weight, name]) => (
          <g key={id}>
            <path id={id} d={d} fill="none" stroke="none" />
            <text fontSize={size} fontWeight={weight} fill={id === "c5" ? "#1f2b4a" : "#262728"} stroke={id === "c5" ? "none" : undefined}>
              <textPath href={`#${id}`}>{name}</textPath>
            </text>
          </g>
        ))}
        {DISTRICTS.map(([x, y, lines]) =>
          lines.map((t, i) => (
            <text key={t} x={x} y={y + i * 28} textAnchor="middle" fontSize="27" fontWeight="500" fill="#1c1c1c" className="tracking-[4px]">
              {t}
            </text>
          )),
        )}
        {PLACES.map(([x, y, color, lines, anchor]) =>
          lines.map((t, i) => (
            <text key={t} x={x} y={y + i * 28} textAnchor={anchor} fontSize="28" fill={color}>
              {t}
            </text>
          )),
        )}
        <g fontSize="37" fill="#25282a" textAnchor="middle">
          <text x="576" y="1592">University</text>
          <text x="576" y="1628">of Virginia</text>
        </g>
      </g>

      {PINS.map(([x, y, color, kind]) => (
        <g key={`${x}-${y}`} transform={`translate(${x} ${y})`}>
          <path d={PIN} fill={color} />
          <g transform="translate(0 -38)"><PinGlyph kind={kind} /></g>
        </g>
      ))}
      <Shield x={2256} y={1200} />
      <Shield x={2490} y={1301} />

      <g transform="translate(1421 1275)">
        <path d="M0 0C-3-20-25-28-25-48A25 25 0 0 1 25-48C25-28 3-20 0 0Z" fill="#d95040" stroke="#b13026" strokeWidth="2" />
        <circle cy="-47" r="10" fill="#a3281f" />
      </g>

      <g className="font-['Liberation_Sans',sans-serif]" fontSize="30" fill="#b0b1b2">
        {[998, 1510].map((y) =>
          [-416, 96, 608, 1120, 1632, 2144, 2656].map((x) => (
            <text key={`${x}-${y}`} x={x} y={y}>For development purposes only</text>
          )),
        )}
      </g>
    </svg>
  );
}

/* ---------- page ---------- */

const NAV_LINKS = ["View Profile", "View All Reviews", "Add Review", "Logout"];

function Star() {
  return (
    <svg viewBox="0 0 44 44" className="size-11" aria-hidden="true">
      <path
        d="M22 5L27 17.500L40 18L30 26.500L33.500 39L22 32L10.500 39L14 26.500L4 18L17 17.500Z"
        fill="#f9d84a"
        stroke="#f9d84a"
        strokeWidth="5"
        strokeLinejoin="round"
      />
    </svg>
  );
}

export default function App() {
  return (
    <div className="flex min-h-screen bg-white font-['Inter',sans-serif] text-[31px] leading-[48px] text-[#212529]">
      <div className="flex min-w-0 flex-1 flex-col">
        <nav className="flex h-[106px] items-center bg-[#316cf4] px-5 pb-1 text-white">
          <a href="#home" className="mr-12 text-[37px] leading-[60px]">Hoos Reviews</a>
          <ul className="flex gap-8">
            {NAV_LINKS.map((label) => (
              <li key={label}><a href="#nav">{label}</a></li>
            ))}
          </ul>
        </nav>

        <main className="flex flex-1 flex-col">
          <h1 className="mt-24 text-center text-[74px] leading-[96px] font-medium">Review for Cafe 88</h1>
          <section className="mx-auto mt-10 w-[1152px] max-w-full rounded-lg border-2 border-[#dfdfdf] px-8 pt-8 pb-16">
            <h2 className="text-center text-[60px] leading-[77px] font-medium">Great Food!</h2>
            <h3 className="mt-2 text-[44px] leading-[58px] font-medium text-[#6c757d]">Review Description:</h3>
            <p className="mt-4">I loved the food</p>
            <p className="mt-8">Star Rating:</p>
            <div className="mt-[42px] flex gap-4" role="img" aria-label="5 out of 5 stars">
              {[1, 2, 3, 4, 5].map((n) => <Star key={n} />)}
            </div>
            <p className="mt-4">Busyness Rating: 3</p>
          </section>

          <section className="relative min-h-[740px] flex-1 overflow-hidden bg-[#5d6468]" aria-label="Map">
            <MapCanvas />
            <button type="button" aria-label="Toggle fullscreen view" className="absolute top-5 right-5 flex size-20 items-center justify-center rounded bg-white shadow">
              <svg viewBox="0 0 36 36" className="size-9" fill="none" stroke="#666" strokeWidth="4">
                <path d="M2 12V2h10M24 2h10v10M34 24v10H24M12 34H2V24" />
              </svg>
            </button>
            <div className="absolute top-[590px] right-5 flex w-20 flex-col items-center rounded bg-white shadow">
              <button type="button" aria-label="Zoom in" className="flex size-20 items-center justify-center">
                <svg viewBox="0 0 36 36" className="size-9" stroke="#666" strokeWidth="8"><path d="M18 0v36M0 18h36" /></svg>
              </button>
              <div className="h-0.5 w-15 bg-[#e6e6e6]" />
              <button type="button" aria-label="Zoom out" className="flex size-20 items-center justify-center">
                <svg viewBox="0 0 36 36" className="size-9" stroke="#666" strokeWidth="8"><path d="M0 18h36" /></svg>
              </button>
            </div>
          </section>
        </main>
      </div>
      <div className="w-1.5 border-l-2 border-[#e6e6e6] bg-[#fafafa]" />
    </div>
  );
}
